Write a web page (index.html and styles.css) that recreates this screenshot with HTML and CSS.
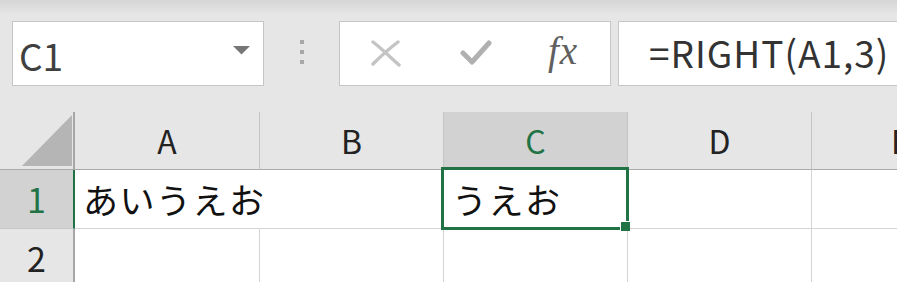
FILE: index.html
```html
<!DOCTYPE html>
<html lang="ja">
<head>
    <meta charset="UTF-8">
    <title>RIGHT関数</title>
    <link rel="stylesheet" href="styles.css">
</head>
<body>
    <div class="toolbar">
        <div class="namebox">
            <span class="name">C1</span>
            <svg class="arrow" width="18" height="9" viewBox="0 0 18 9"><polygon points="0,0 17,0 8.5,8.5" fill="#777"/></svg>
        </div>
        <div class="grip"><span></span><span></span><span></span></div>
        <div class="fxbox">
            <svg class="icon-cancel" width="30" height="28" viewBox="0 0 30 28">
                <path d="M2 3 C 10 9, 18 17, 28 26" stroke="#c4c4c4" stroke-width="3.4" fill="none" stroke-linecap="round"/>
                <path d="M27 3 C 19 9, 11 16, 2 25" stroke="#c4c4c4" stroke-width="3.4" fill="none" stroke-linecap="round"/>
            </svg>
            <svg class="icon-enter" width="32" height="28" viewBox="0 0 32 28">
                <path d="M3 14 L12 23 L29 4" stroke="#b0b0b0" stroke-width="5" fill="none" stroke-linecap="round" stroke-linejoin="round"/>
            </svg>
            <span class="fx">fx</span>
        </div>
        <div class="formula">=RIGHT(A1,3)</div>
    </div>

    <div class="sheet">
        <div class="corner">
            <svg width="73" height="57" viewBox="0 0 73 57"><polygon points="22,54 72,54 72,3" fill="#b5b5b5"/></svg>
        </div>
        <div class="colhead">A</div>
        <div class="colhead">B</div>
        <div class="colhead active">C</div>
        <div class="colhead">D</div>
        <div class="colhead edge">E</div>

        <div class="rowhead active">1</div>
        <div class="cell spill">あいうえお</div>
        <div class="cell"></div>
        <div class="cell selected">うえお</div>
        <div class="cell"></div>
        <div class="cell"></div>

        <div class="rowhead">2</div>
        <div class="cell"></div>
        <div class="cell"></div>
        <div class="cell"></div>
        <div class="cell"></div>
        <div class="cell"></div>
    </div>
</body>
</html>
```

FILE: styles.css
```css
* {
    margin: 0;
    padding: 0;
    box-sizing: border-box;
}

body {
    width: 897px;
    height: 282px;
    overflow: hidden;
    background-color: #e6e6e6;
    font-family: "Noto Sans CJK JP", "Noto Sans", sans-serif;
    color: #222;
}

/* formula bar */
.toolbar {
    height: 112px;
    display: flex;
    align-items: flex-start;
    padding: 21px 0 0 12px;
    background: linear-gradient(#d5d5d5 0px, #e6e6e6 14px);
}

.namebox,
.fxbox,
.formula {
    height: 65px;
    background: #fff;
    border: 1px solid #c6c6c6;
}

.namebox {
    width: 252px;
    display: flex;
    align-items: center;
    padding: 3px 12px 0 6px;
}

.name {
    flex: 1;
    font-size: 37px;
    color: #404040;
    line-height: 1;
}

.arrow {
    display: block;
    margin-top: -10px;
}

.grip {
    width: 75px;
    display: flex;
    flex-direction: column;
    align-items: center;
    gap: 6px;
    padding-top: 19px;
}

.grip span {
    width: 4px;
    height: 4px;
    background: #a8a8a8;
}

.fxbox {
    width: 272px;
    display: flex;
    align-items: center;
    padding: 0 0 2px 31px;
}

.icon-cancel {
    display: block;
}

.icon-enter {
    display: block;
    margin-left: 59px;
}

.fx {
    margin-left: 56px;
    font-family: "Liberation Serif", serif;
    font-style: italic;
    font-size: 39px;
    color: #606060;
    line-height: 1;
    margin-top: -4px;
    letter-spacing: 1px;
}

.formula {
    flex: 1;
    margin-left: 7px;
    margin-right: -40px;
    display: flex;
    align-items: center;
    padding: 0 0 4px 30px;
    font-size: 37px;
    letter-spacing: 1px;
    color: #333;
    white-space: nowrap;
}

/* grid */
.sheet {
    display: grid;
    grid-template-columns: 75px 185px 184px 184px 184px 184px;
    grid-template-rows: 58px 59px 59px;
    width: 996px;
    background: #fff;
}

.corner,
.colhead {
    background: #e6e6e6;
    border-bottom: 1px solid #ababab;
}

.corner {
    border-right: 2px solid #a6a6a6;
}

.corner svg {
    display: block;
}

.colhead {
    border-right: 1px solid #c4c4c4;
    display: flex;
    align-items: center;
    justify-content: center;
    font-size: 32px;
    padding-bottom: 2px;
}

.colhead.edge {
    justify-content: flex-start;
    padding-left: 79px;
}

.colhead.active {
    background: #d2d2d2;
    color: #217346;
}

.rowhead {
    background: #e6e6e6;
    border-right: 2px solid #a6a6a6;
    border-bottom: 1px solid #c8c8c8;
    display: flex;
    align-items: center;
    justify-content: center;
    font-size: 34px;
    padding-bottom: 2px;
}

.rowhead.active {
    background: #d2d2d2;
    color: #217346;
    border-right-color: #217346;
}

.cell {
    border-right: 1px solid #d4d4d4;
    border-bottom: 1px solid #d4d4d4;
    display: flex;
    align-items: center;
    padding: 0 0 2px 8px;
    font-size: 35px;
    letter-spacing: 1.5px;
    color: #111;
    white-space: nowrap;
}

.cell.spill {
    border-right-color: #fff;
}

.cell.selected {
    position: relative;
}

.cell.selected::after {
    content: "";
    position: absolute;
    top: -3px;
    left: -3px;
    right: -2px;
    bottom: -2px;
    border: 3px solid #217346;
    z-index: 1;
}

.cell.selected::before {
    content: "";
    position: absolute;
    right: -3px;
    bottom: -3px;
    width: 9px;
    height: 9px;
    background: #217346;
    box-shadow: -1px -1px 0 #fff;
    z-index: 2;
}
```
